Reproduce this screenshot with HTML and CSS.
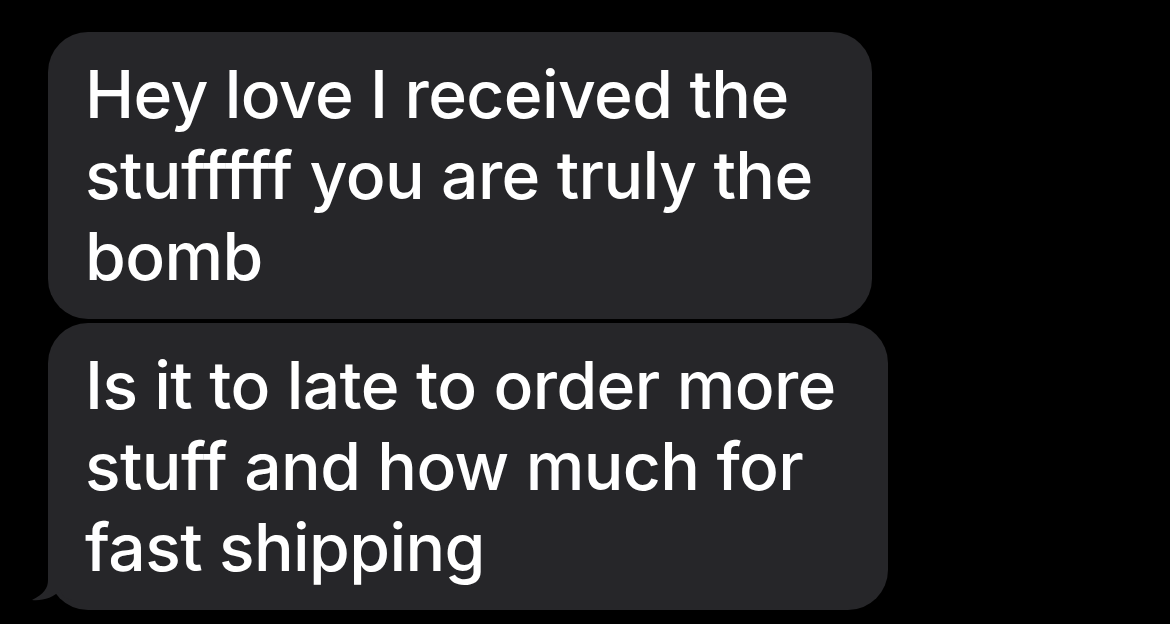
FILE: index.html
```html
<!DOCTYPE html>
<html>
<head>
<meta charset="utf-8">
<link rel="stylesheet" href="styles.css">
</head>
<body>
<div class="thread">
  <div class="bubble bubble-a">Hey love I received the<br>stufffff you are truly the<br>bomb</div>
  <div class="bubble bubble-b">Is it to late to order more<br>stuff and how much for<br>fast shipping
    <svg class="tail" width="40" height="40" viewBox="0 0 40 40"><path d="M16 0 L16 10 C16 18 12 24 0 30 C10 31 22 28 28 20 C30 26 34 29 40 30 L40 0 Z" fill="#262629"/></svg>
  </div>
</div>
</body>
</html>
```
FILE: styles.css
```css
html, body {
  margin: 0;
  background: #000;
}
body {
  width: 1170px;
  height: 624px;
  overflow: hidden;
  font-family: "Inter", "Liberation Sans", sans-serif;
}
.thread {
  display: flex;
  flex-direction: column;
  gap: 4px;
  padding: 32px 0 0 48px;
}
.bubble {
  position: relative;
  box-sizing: border-box;
  background: #262629;
  color: #fff;
  border-radius: 40px;
  font-size: 66px;
  font-weight: 500;
  letter-spacing: -0.6px;
  font-variant-ligatures: none;
  font-feature-settings: "liga" 0, "calt" 0;
  line-height: 81px;
  padding: 22px 0 22px 37px;
  height: 287px;
  white-space: nowrap;
}
.bubble-a { width: 824px; }
.bubble-b { width: 840px; }
.tail {
  position: absolute;
  left: -16px;
  bottom: 0;
}
```
